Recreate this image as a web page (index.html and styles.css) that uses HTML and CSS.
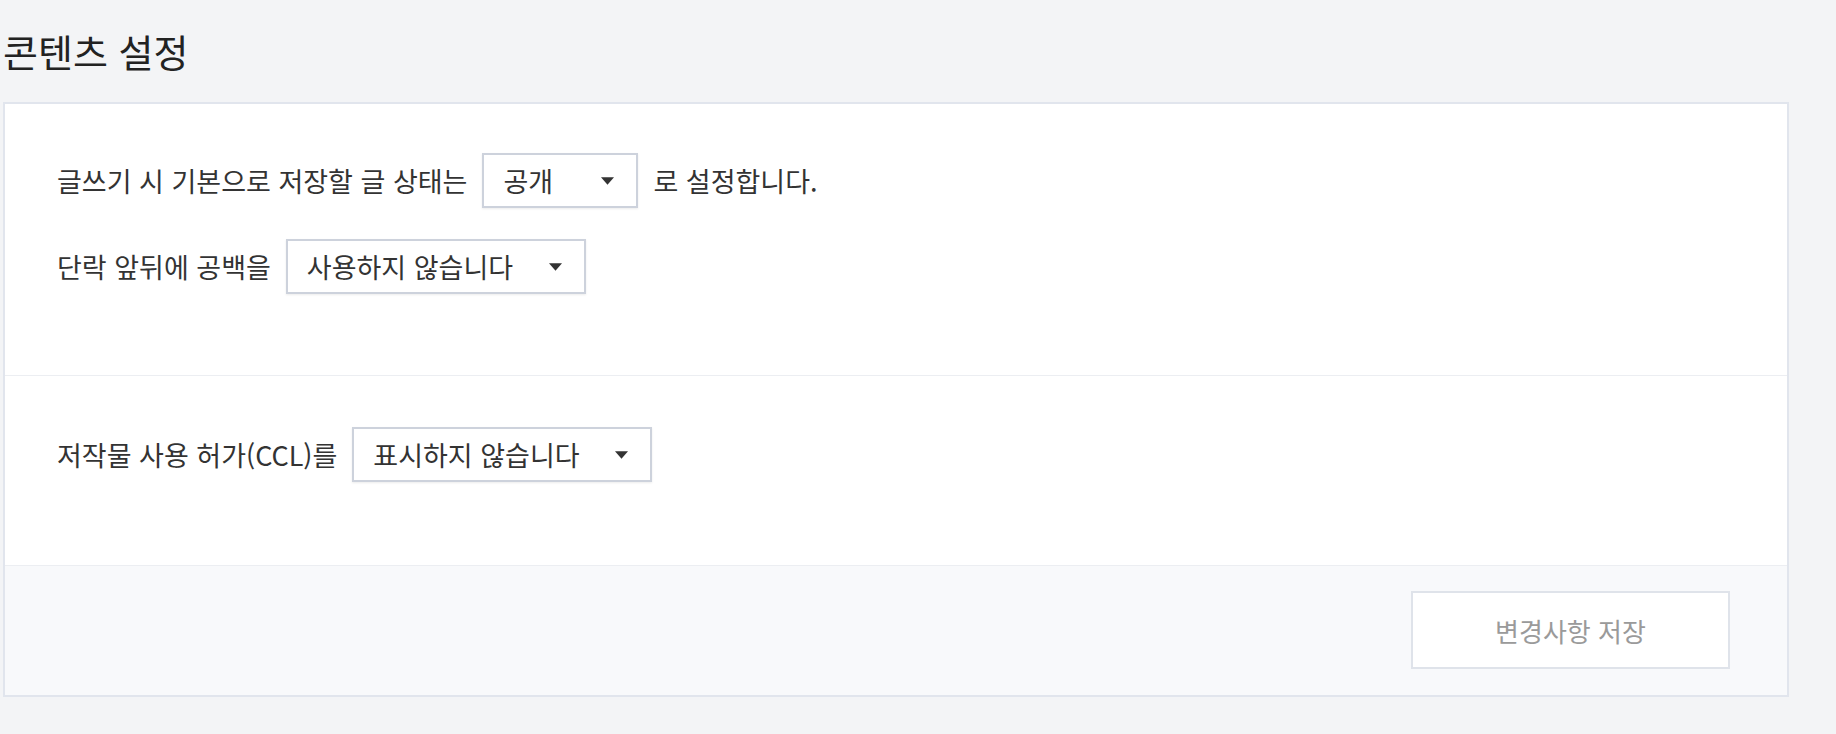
FILE: index.html
```html
<!DOCTYPE html>
<html lang="ko">
<head>
<meta charset="utf-8">
<title>콘텐츠 설정</title>
<link rel="stylesheet" href="styles.css">
</head>
<body>
<div class="page">
  <h1 class="title">콘텐츠 설정</h1>
  <div class="card">
    <section class="section">
      <div class="row">
        <span class="label">글쓰기 시 기본으로 저장할 글 상태는</span>
        <div class="select select-sm"><span>공개</span><svg class="caret" viewBox="0 0 12 7"><path d="M0 0H12L6 7Z"/></svg></div>
        <span class="label">로 설정합니다.</span>
      </div>
      <div class="row">
        <span class="label">단락 앞뒤에 공백을</span>
        <div class="select select-lg"><span>사용하지 않습니다</span><svg class="caret" viewBox="0 0 12 7"><path d="M0 0H12L6 7Z"/></svg></div>
      </div>
    </section>
    <section class="section">
      <div class="row">
        <span class="label">저작물 사용 허가(CCL)를</span>
        <div class="select select-lg"><span>표시하지 않습니다</span><svg class="caret" viewBox="0 0 12 7"><path d="M0 0H12L6 7Z"/></svg></div>
      </div>
    </section>
    <footer class="footer">
      <button class="save" type="button">변경사항 저장</button>
    </footer>
  </div>
</div>
</body>
</html>
```
FILE: styles.css
```css
html, body {
  margin: 0;
  padding: 0;
  background: #f3f4f6;
}
body {
  font-family: "Noto Sans CJK KR", "Noto Sans", sans-serif;
  color: #333;
}
.page {
  padding: 0 47px 0 3px;
}
.title {
  margin: 0;
  height: 102px;
  box-sizing: border-box;
  padding-top: 25px;
  font-size: 38px;
  font-weight: 400;
  letter-spacing: 0;
  line-height: 52px;
  color: #222;
}
.card {
  background: #fff;
  border: 2px solid #e1e5ed;
}
.section {
  padding: 49px 52px 50px;
  border-bottom: 1px solid #eceef2;
}
.section + .section {
  padding-top: 51px;
  padding-bottom: 52px;
}
.row {
  display: flex;
  align-items: center;
  gap: 15px;
  margin-bottom: 31px;
  font-size: 27px;
}
.label {
  white-space: nowrap;
}
.select {
  display: flex;
  align-items: center;
  justify-content: space-between;
  box-sizing: border-box;
  height: 55px;
  padding: 0 22px 0 19px;
  border: 2px solid #cdd2dc;
  box-shadow: 0 1px 2px rgba(0, 0, 0, 0.08);
  background: #fff;
  color: #333;
}
.select-sm { width: 156px; }
.select-lg { width: 300px; }
.caret {
  width: 13px;
  height: 8px;
  fill: #333;
}
.footer {
  display: flex;
  justify-content: flex-end;
  padding: 25px 57px 26px;
  background: #f8f9fb;
}
.save {
  width: 319px;
  height: 78px;
  background: #fff;
  border: 2px solid #dfe3ea;
  font-family: inherit;
  font-size: 26px;
  color: #9a9a9a;
  cursor: pointer;
}
```
